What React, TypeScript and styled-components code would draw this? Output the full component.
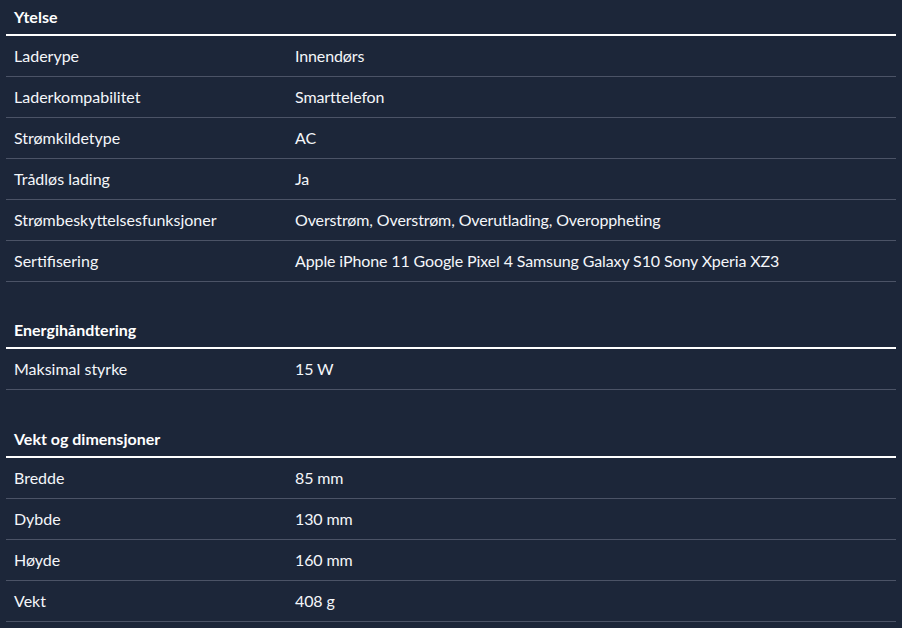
import React from "react";
import styled, { createGlobalStyle } from "styled-components";

const Global = createGlobalStyle`
  html, body {
    margin: 0;
    padding: 0;
    background: #1c2639;
  }
  body {
    font-family: Lato, "Open Sans", sans-serif;
    color: #ffffff;
  }
`;

const Page = styled.div`
  background: #1c2639;
  min-height: 628px;
  padding: 0 6px;
  box-sizing: border-box;
`;

const Section = styled.section`
  & + & {
    margin-top: 31px;
  }
  & + & + & {
    margin-top: 32px;
  }
`;

const Header = styled.h2`
  margin: 0;
  height: 36px;
  box-sizing: border-box;
  padding: 0 8px 2px;
  display: flex;
  align-items: center;
  font-size: 16px;
  font-weight: 700;
  color: #ffffff;
  border-bottom: 2px solid #ffffff;
`;

const Row = styled.div`
  display: grid;
  grid-template-columns: 281px 1fr;
  height: 41px;
  box-sizing: border-box;
  padding-bottom: 2px;
  border-bottom: 1px solid #4b5366;
  align-items: center;
  font-size: 16px;
  color: #f4f6fa;
`;

const Cell = styled.div<{ $value?: boolean }>`
  padding: 0 8px;
  white-space: nowrap;
  letter-spacing: ${(p) => (p.$value ? "-0.12px" : "0")};
`;

type Spec = { title: string; rows: [string, string][] };

const data: Spec[] = [
  {
    title: "Ytelse",
    rows: [
      ["Laderype", "Innendørs"],
      ["Laderkompabilitet", "Smarttelefon"],
      ["Strømkildetype", "AC"],
      ["Trådløs lading", "Ja"],
      ["Strømbeskyttelsesfunksjoner", "Overstrøm, Overstrøm, Overutlading, Overoppheting"],
      ["Sertifisering", "Apple iPhone 11 Google Pixel 4 Samsung Galaxy S10 Sony Xperia XZ3"],
    ],
  },
  {
    title: "Energihåndtering",
    rows: [["Maksimal styrke", "15 W"]],
  },
  {
    title: "Vekt og dimensjoner",
    rows: [
      ["Bredde", "85 mm"],
      ["Dybde", "130 mm"],
      ["Høyde", "160 mm"],
      ["Vekt", "408 g"],
    ],
  },
];

export default function App() {
  return (
    <>
      <Global />
      <Page>
        {data.map((s) => (
          <Section key={s.title}>
            <Header>{s.title}</Header>
            {s.rows.map(([k, v]) => (
              <Row key={k}>
                <Cell>{k}</Cell>
                <Cell $value>{v}</Cell>
              </Row>
            ))}
          </Section>
        ))}
      </Page>
    </>
  );
}
